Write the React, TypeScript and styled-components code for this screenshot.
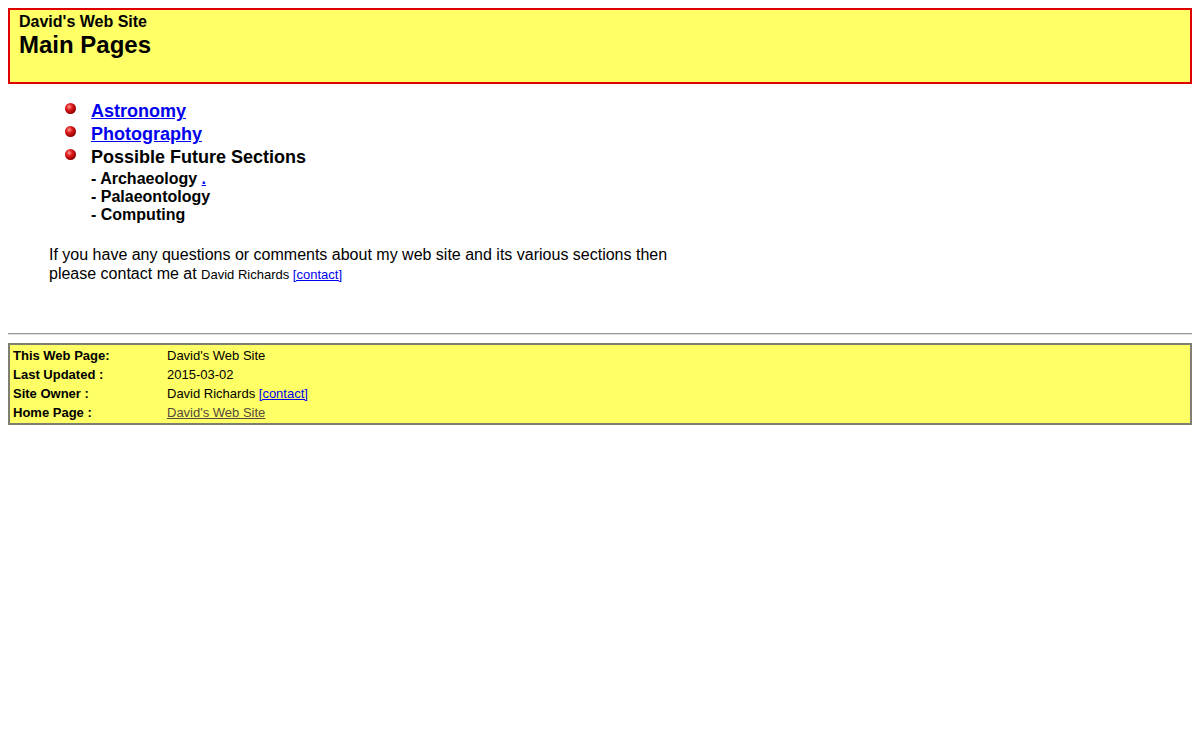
import React from "react";
import styled, { createGlobalStyle } from "styled-components";

const Global = createGlobalStyle`
  html, body { background: #ffffff; }
  body {
    margin: 8px;
    font-family: "Liberation Sans", Arial, sans-serif;
    color: #000000;
  }
`;

const Header = styled.div`
  border: 2px solid #e00000;
  background: #ffff66;
  padding: 3px 9px 0;
  box-sizing: content-box;
  height: 69px;
`;

const SiteName = styled.div`
  font-size: 16px;
  font-weight: bold;
  line-height: 18px;
`;

const PageTitle = styled.div`
  font-size: 24px;
  font-weight: bold;
  line-height: 28px;
`;

const List = styled.ul`
  list-style: none;
  margin: 16px 0 0;
  padding: 0 0 0 57px;
`;

const Item = styled.li`
  display: flex;
  align-items: flex-start;
  gap: 15px;
  font-size: 18px;
  font-weight: bold;
  line-height: 23px;
`;

const Ball = styled.span`
  flex: none;
  width: 11px;
  height: 11px;
  margin-top: 3px;
  border-radius: 50%;
  background: radial-gradient(circle at 38% 35%, #ff9a9a 0%, #e02020 30%, #a00000 65%, #500000 100%);
`;

const MainLink = styled.a`
  color: #0000ee;
  text-decoration: underline;
`;

const SubList = styled.div`
  display: flex;
  flex-direction: column;
  font-size: 16px;
  line-height: 18px;
  margin-top: 1px;
`;

const SmallLink = styled.a`
  color: #0000ee;
`;

const Para = styled.p`
  margin: 21px 0 0 41px;
  font-size: 16px;
  line-height: 19px;
  width: 640px;
`;

const Small = styled.span`
  font-size: 13px;
`;

const NarrowLink = styled.a`
  color: #0000ee;
`;

const Rule = styled.hr`
  margin: 49px 0 8px;
  border: 0;
  border-top: 1px solid #9a9a9a;
  border-bottom: 1px solid #dcdcdc;
  height: 0;
`;

const Footer = styled.table`
  width: 100%;
  border: 2px solid #7f7f70;
  background: #ffff66;
  border-collapse: separate;
  border-spacing: 0;
  font-size: 13px;
  padding: 1px 0;
`;

const Label = styled.td`
  font-weight: bold;
  width: 148px;
  padding: 0 3px;
  height: 19px;
  line-height: 19px;
`;

const Value = styled.td`
  padding: 0 3px;
  height: 19px;
  line-height: 19px;
`;

const FootLink = styled.a<{ $visited?: boolean }>`
  color: ${(p) => (p.$visited ? "#554a3c" : "#0000ee")};
`;

export default function App() {
  return (
    <>
      <Global />
      <Header>
        <SiteName>David's Web Site</SiteName>
        <PageTitle>Main Pages</PageTitle>
      </Header>
      <List>
        <Item>
          <Ball />
          <MainLink href="#">Astronomy</MainLink>
        </Item>
        <Item>
          <Ball />
          <MainLink href="#">Photography</MainLink>
        </Item>
        <Item>
          <Ball />
          <div>
            Possible Future Sections
            <SubList>
              <span>
                - Archaeology <SmallLink href="#">.</SmallLink>
              </span>
              <span>- Palaeontology</span>
              <span>- Computing</span>
            </SubList>
          </div>
        </Item>
      </List>
      <Para>
        If you have any questions or comments about my web site and its various sections then please contact me at{" "}
        <Small>
          David Richards <NarrowLink href="#">[contact]</NarrowLink>
        </Small>
      </Para>
      <Rule />
      <Footer>
        <tbody>
          <tr>
            <Label>This Web Page:</Label>
            <Value>David's Web Site</Value>
          </tr>
          <tr>
            <Label>Last Updated :</Label>
            <Value>2015-03-02</Value>
          </tr>
          <tr>
            <Label>Site Owner :</Label>
            <Value>
              David Richards <FootLink href="#">[contact]</FootLink>
            </Value>
          </tr>
          <tr>
            <Label>Home Page :</Label>
            <Value>
              <FootLink href="#" $visited>
                David's Web Site
              </FootLink>
            </Value>
          </tr>
        </tbody>
      </Footer>
    </>
  );
}
